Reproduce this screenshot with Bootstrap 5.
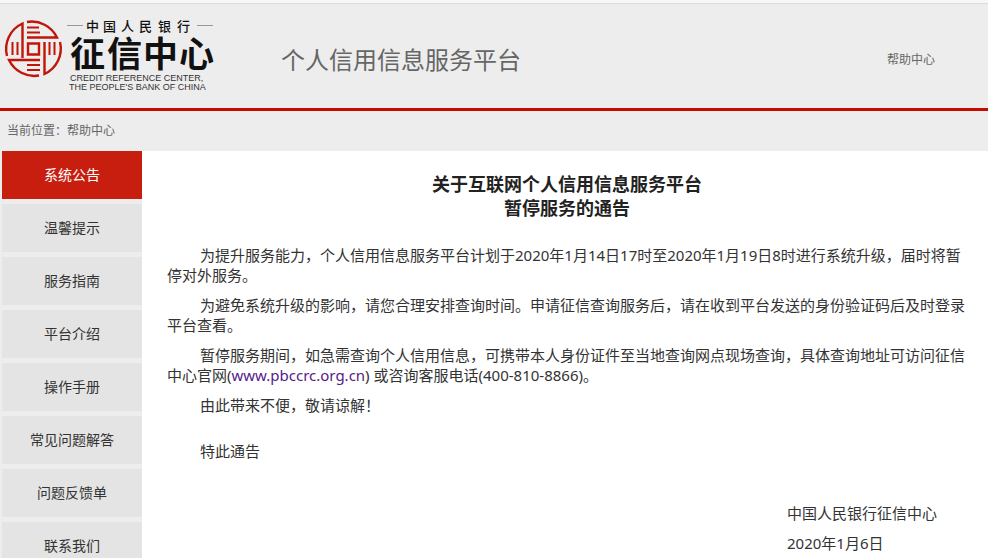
<!DOCTYPE html>
<html lang="zh-CN">
<head>
<meta charset="utf-8">
<meta name="viewport" content="width=device-width, initial-scale=1">
<title>个人信用信息服务平台</title>
<link href="https://cdn.jsdelivr.net/npm/bootstrap@5.3.0/dist/css/bootstrap.min.css" rel="stylesheet">
<style>
  body {
    background: #ededed;
    color: #333;
    font-family: "Noto Sans", "Noto Sans CJK SC", sans-serif;
    font-size: 15px;
    line-height: 20px;
  }
  a { text-decoration: none; }
  .top-strip { height: 4px; background: #f7f7f7; border-bottom: 1px solid #dcdcdc; }
  .site-header { height: 107px; padding-top: 8px; border-bottom: 3px solid #c30d00; }
  .brand-logo { width: 216px; height: 92px; }
  .site-title { font-size: 24px; line-height: 36px; color: #666; font-weight: 400; margin-left: 65px; }
  .help-link { font-size: 12px; color: #666; margin-right: 53px; }
  .crumbs { font-size: 12px; color: #666; padding: 10px 7px; }
  .crumbs a { color: inherit; }
  .side-menu { width: 142px; padding-left: 2px; gap: 5px; background: #ededed; }
  .side-menu .nav-link {
    padding: 0;
    font-size: 14px;
    line-height: 48px;
    color: #333;
    background: #e4e4e4;
    text-align: center;
  }
  .side-menu .nav-link.active { background: #c71e0f; color: #fff; }
  .notice { padding: 21px 21px 0 25px; }
  .notice h1 { font-size: 18px; line-height: 24px; font-weight: 700; color: #222; margin-bottom: 25px; }
  .notice-text p { text-indent: 33px; margin-bottom: 10px; }
  .notice-text .closing { margin-top: 26px; margin-bottom: 42px; }
  .notice-text a { color: #551a8b; }
  .signature { width: 180px; }
  .signature p { margin-bottom: 10px; }
</style>
</head>
<body>
<div class="top-strip"></div>
<header class="site-header d-flex align-items-center">
  <svg class="brand-logo flex-shrink-0" viewBox="0 14 216 92" role="img" aria-label="中国人民银行征信中心">
    <g fill="none" stroke="#c01508" stroke-width="2.400">
      <path d="M22.500 58V23.500A28 28 0 0 0 7 56"/>
      <path d="M27 22A28 28 0 0 1 57 37.500H27"/>
      <path d="M44.500 42V74A28 28 0 0 0 60 42"/>
      <path d="M40 60H9A28 28 0 0 0 39 75.500"/>
      <path d="M27 27.500h12M27 32.500h13M27 65h13M27 70h13M12.500 42v13M17.500 42v13M49.500 42v13M54.500 42v13" stroke-width="2"/>
      <path d="M28 43.500h11v11H28z"/>
    </g>
    <path d="M67 25.500h16M197 25.500h16" stroke="#999" stroke-width="1"/>
    <g fill="#111">
      <text x="86 103 121 139 158 177" y="31" font-size="13" font-weight="500">中国人民银行</text>
      <text x="70 107 143 179" y="67" font-size="35" font-weight="700">征信中心</text>
    </g>
    <g fill="#333" font-family="Liberation Sans, sans-serif" font-size="9">
      <text x="70" y="81">CREDIT REFERENCE CENTER,</text>
      <text x="69" y="90">THE PEOPLE'S BANK OF CHINA</text>
    </g>
  </svg>
  <div class="site-title">个人信用信息服务平台</div>
  <a class="help-link ms-auto" href="#">帮助中心</a>
</header>
<nav class="crumbs" aria-label="当前位置">当前位置：<a href="#">帮助中心</a></nav>
<div class="d-flex">
  <nav class="side-menu nav flex-column flex-nowrap flex-shrink-0" aria-label="帮助中心">
    <a class="nav-link active" aria-current="page" href="#">系统公告</a>
    <a class="nav-link" href="#">温馨提示</a>
    <a class="nav-link" href="#">服务指南</a>
    <a class="nav-link" href="#">平台介绍</a>
    <a class="nav-link" href="#">操作手册</a>
    <a class="nav-link" href="#">常见问题解答</a>
    <a class="nav-link" href="#">问题反馈单</a>
    <a class="nav-link" href="#">联系我们</a>
  </nav>
  <main class="notice flex-grow-1 bg-white">
    <h1 class="text-center">关于互联网个人信用信息服务平台<br>暂停服务的通告</h1>
    <div class="notice-text">
      <p>为提升服务能力，个人信用信息服务平台计划于2020年1月14日17时至2020年1月19日8时进行系统升级，届时将暂停对外服务。</p>
      <p>为避免系统升级的影响，请您合理安排查询时间。申请征信查询服务后，请在收到平台发送的身份验证码后及时登录平台查看。</p>
      <p>暂停服务期间，如急需查询个人信用信息，可携带本人身份证件至当地查询网点现场查询，具体查询地址可访问征信中心官网(<a href="#">www.pbccrc.org.cn</a>) 或咨询客服电话(400-810-8866)。</p>
      <p>由此带来不便，敬请谅解！</p>
      <p class="closing">特此通告</p>
    </div>
    <div class="signature ms-auto">
      <p>中国人民银行征信中心</p>
      <p>2020年1月6日</p>
    </div>
  </main>
</div>
<script src="https://cdn.jsdelivr.net/npm/bootstrap@5.3.0/dist/js/bootstrap.bundle.min.js"></script>
</body>
</html>
